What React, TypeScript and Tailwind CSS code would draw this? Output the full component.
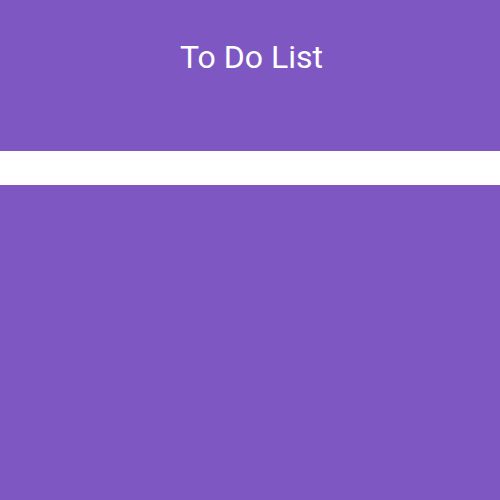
export default function App() {
  return (
    <div className="min-h-[500px] bg-[#7e57c2] font-['Roboto',sans-serif]">
      <h1 className="pt-[37px] pb-[74px] pl-[3px] text-center text-[32px] leading-[40px] text-white">To Do List</h1>
      <div className="h-[34px] bg-white">
        <input className="h-full w-full bg-transparent px-3 outline-none" type="text" />
      </div>
    </div>
  );
}
